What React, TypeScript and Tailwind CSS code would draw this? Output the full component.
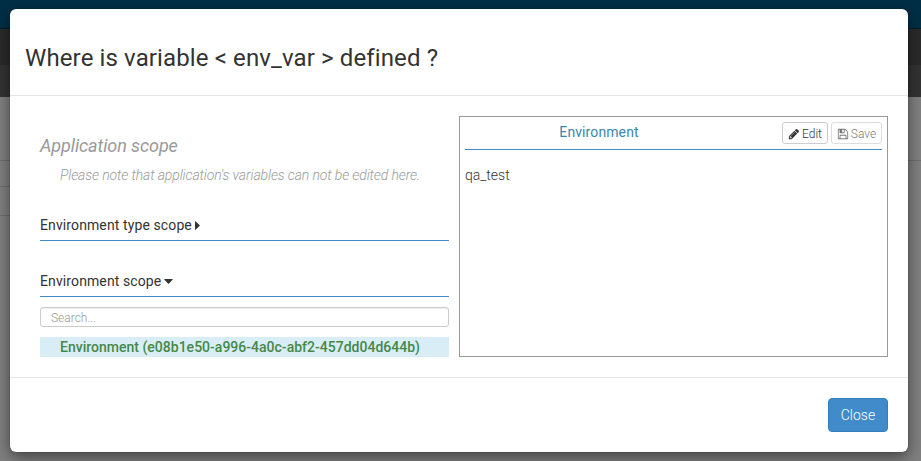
import type { ReactNode } from "react";

function PencilIcon() {
  return (
    <svg viewBox="0 0 1792 1792" className="h-3 w-3 shrink-0 fill-current" aria-hidden="true">
      <path d="M491 1536l91-91-235-235-91 91v107h128v128h107zm523-928q0-22-22-22-10 0-17 7l-542 542q-7 7-7 17 0 22 22 22 10 0 17-7l542-542q7-7 7-17zm-54-192l416 416-832 832h-416v-416zm683 96q0 53-37 90l-166 166-416-416 166-165q36-38 90-38 53 0 91 38l235 234q37 39 37 91z" />
    </svg>
  );
}

function SaveIcon() {
  return (
    <svg viewBox="0 0 1792 1792" className="h-3 w-3 shrink-0 fill-current" aria-hidden="true">
      <path d="M512 1536h768v-384h-768v384zm896 0h128v-896q0-14-10-38.5t-20-34.5l-281-281q-10-10-34-20t-39-10v416q0 40-28 68t-68 28h-576q-40 0-68-28t-28-68v-416h-128v1280h128v-416q0-40 28-68t68-28h832q40 0 68 28t28 68v416zm-384-928v-320q0-13-9.5-22.5t-22.5-9.5h-192q-13 0-22.5 9.5t-9.5 22.5v320q0 13 9.5 22.5t22.5 9.5h192q13 0 22.5-9.5t9.5-22.5zm640 32v928q0 40-28 68t-68 28h-1344q-40 0-68-28t-28-68v-1344q0-40 28-68t68-28h928q40 0 88 20t76 48l280 280q28 28 48 76t20 88z" />
    </svg>
  );
}

function SectionTitle({ children, open }: { children: ReactNode; open: boolean }) {
  return (
    <h5 className="flex h-[26px] items-start border-b border-[#428bca] text-sm leading-5 font-normal tracking-[0.11px]">
      {children}
      {open ? (
        <svg viewBox="0 0 9 5" className="mt-2 ml-[3px] h-[5px] w-[9px] fill-current">
          <path d="M0.5 0h8q.5.3 0 .8l-3.5 3.7q-.5.5-1 0L.4.8q-.4-.5.1-.8z" />
        </svg>
      ) : (
        <svg viewBox="0 0 5 9" className="mt-[6px] ml-[3px] h-[9px] w-[5px] fill-current">
          <path d="M0 .5v8q.3.5.8 0l3.7-3.5q.5-.5 0-1L.8.4q-.5-.4-.8.1z" />
        </svg>
      )}
    </h5>
  );
}

function Page() {
  return (
    <div className="flex h-full flex-col">
      <div className="h-7 bg-[#002f46]" />
      <div className="h-px bg-[#001f2e]" />
      <div className="h-9 bg-[#2b2b2b]" />
      <div className="h-8 bg-[#333333]" />
      <div className="flex flex-1 justify-between">
        <div className="w-10">
          <div className="h-16 border-b border-[#6e6e6e]" />
          <div className="h-[26px] border-b border-[#6e6e6e]" />
          <div className="h-[29px] border-b border-[#6e6e6e]" />
        </div>
        <div className="w-10">
          <div className="h-16 border-b border-[#6e6e6e]" />
        </div>
      </div>
    </div>
  );
}

export default function App() {
  return (
    <div className="relative h-[461px] w-[921px] overflow-hidden bg-[#808080] font-['Roboto',sans-serif] text-sm leading-5 font-light text-[#333]">
      <Page />
      <div className="absolute inset-0 pt-[9px] pl-[10px]">
        <div
          role="dialog"
          className="flex h-[443px] w-[898px] flex-col rounded-md bg-white shadow-[0_5px_15px_rgba(0,0,0,0.5),0_0_1px_rgba(0,0,0,0.6)]"
        >
          <header className="h-[87px] border-b border-[#e5e5e5] pt-[36px] pl-[15px]">
            <h3 className="text-2xl leading-[26px] font-normal tracking-[0.12px]">
              Where is variable &lt; env_var &gt; defined ?
            </h3>
          </header>
          <main className="flex flex-1 gap-[10px] pt-5 pr-5 pl-[30px]">
            <div className="w-[409px]">
              <h4 className="pt-5 text-lg leading-5 font-normal tracking-[-0.09px] text-[#999] italic">Application scope</h4>
              <p className="mt-[9px] mb-[30px] pl-5 tracking-[-0.12px] text-[#999] italic">
                Please note that application's variables can not be edited here.
              </p>
              <SectionTitle open={false}>Environment type scope</SectionTitle>
              <div className="h-[30px]" />
              <SectionTitle open>Environment scope</SectionTitle>
              <input
                placeholder="Search..."
                className="mt-[10px] block h-5 w-full rounded-[3px] border border-[#ccc] px-[10px] pt-px text-xs font-light shadow-[inset_0_1px_1px_rgba(0,0,0,0.075)] placeholder:text-[#999]"
              />
              <div className="mt-[10px] h-5 bg-[#d9edf7] pl-5 font-medium tracking-[0.01px] text-[#468847]">
                Environment (e08b1e50-a996-4a0c-abf2-457dd04d644b)
              </div>
            </div>
            <section className="h-[241px] w-[429px] border border-[#999] p-[5px] pt-0">
              <div className="flex h-[33px] items-start border-b border-[#428bca]">
                <h5 className="w-[268px] pt-[5px] text-center font-normal tracking-[0.1px] text-[#3a87ad]">Environment</h5>
                <div className="mt-[5px] ml-auto flex gap-[3px]">
                  <button className="flex h-[22px] w-[46px] items-center justify-center gap-[2px] rounded-[3px] border border-[#ccc] pt-px text-xs leading-[18px]">
                    <PencilIcon />
                    Edit
                  </button>
                  <button
                    disabled
                    className="flex h-[22px] w-[51px] items-center justify-center gap-[2px] rounded-[3px] border border-[#ccc] pt-px text-xs leading-[18px] opacity-65"
                  >
                    <SaveIcon />
                    Save
                  </button>
                </div>
              </div>
              <div className="pt-[15px]">qa_test</div>
            </section>
          </main>
          <footer className="flex h-[75px] justify-end border-t border-[#e5e5e5] pt-5 pr-5">
            <button className="h-[34px] w-[60px] rounded border border-[#357ebd] bg-[#428bca] text-sm font-light text-white">
              Close
            </button>
          </footer>
        </div>
      </div>
    </div>
  );
}
